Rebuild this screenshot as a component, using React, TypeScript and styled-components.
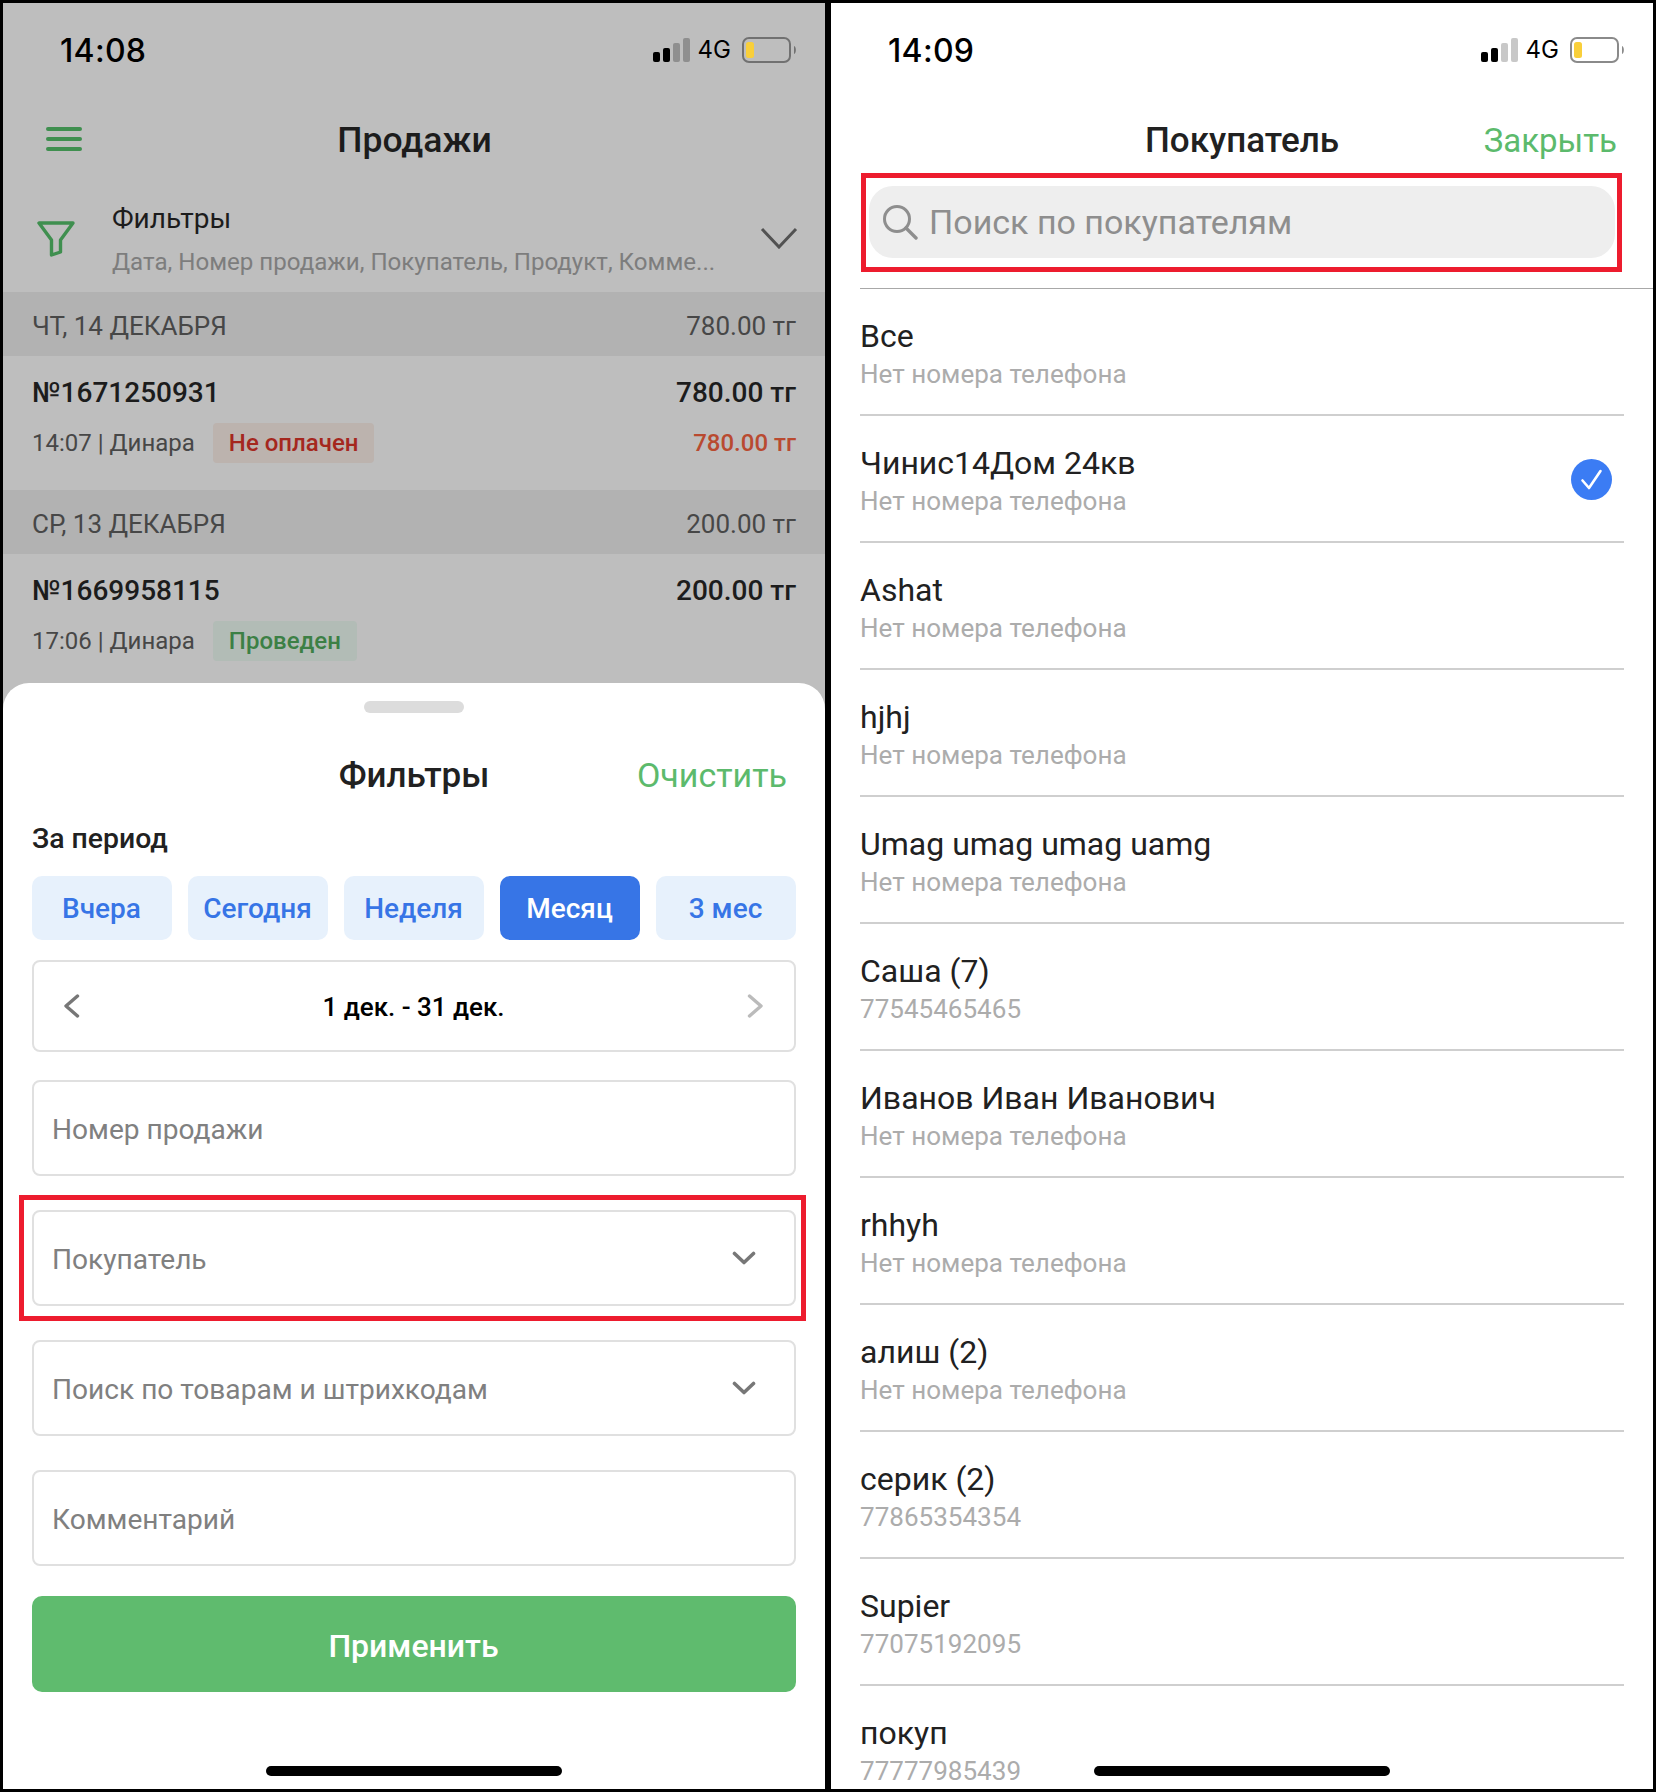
import React from "react";
import styled, { createGlobalStyle } from "styled-components";

const Global = createGlobalStyle`
  html, body { margin: 0; padding: 0; background: #000; }
  * { box-sizing: border-box; }
  body { font-family: Roboto, "Liberation Sans", sans-serif; }
`;

const Frame = styled.div`
  width: 1656px;
  height: 1792px;
  background: #000;
  padding: 3px;
  display: flex;
  gap: 6px;
  overflow: hidden;
`;

const Phone = styled.div<{ $dim?: boolean }>`
  position: relative;
  width: 822px;
  height: 1786px;
  background: ${(p) => (p.$dim ? "#bebebe" : "#fff")};
  display: flex;
  flex-direction: column;
  overflow: hidden;
`;

const StatusBar = styled.div`
  height: 97px;
  flex: none;
  display: flex;
  align-items: center;
  justify-content: space-between;
  padding: 0 28px 4px 57px;
`;

const Time = styled.div`
  font-family: Inter, sans-serif;
  font-size: 32px;
  font-weight: 500;
  color: #000;
  letter-spacing: 0.3px;
  padding-top: 2px;
`;

const StatusRight = styled.div`
  display: flex;
  align-items: center;
  gap: 8px;
`;

const Net = styled.span`
  font-family: Inter, sans-serif;
  font-size: 24px;
  color: #000;
  margin-right: 3px;
`;

const SalesArea = styled.div`
  height: 583px;
  flex: none;
  display: flex;
  flex-direction: column;
`;

const NavBar = styled.div`
  height: 80px;
  flex: none;
  display: flex;
  align-items: center;
  justify-content: center;
  position: relative;
`;

const NavIcon = styled.div`
  position: absolute;
  left: 43px;
  top: 26px;
  display: flex;
`;

const NavTitle = styled.div`
  font-size: 35.5px;
  font-weight: 500;
  color: #1c1c1c;
  padding-left: 1px;
`;

const FilterBar = styled.div`
  height: 112px;
  flex: none;
  display: flex;
  align-items: center;
  padding: 6px 27px 0 34px;
  > svg:last-child {
    margin-top: -2px;
  }
`;

const FilterText = styled.div`
  flex: 1;
  margin-left: 37px;
  display: flex;
  flex-direction: column;
  gap: 13px;
  padding-top: 3px;
`;

const FilterTitle = styled.div`
  font-size: 28px;
  color: #1c1c1c;
  line-height: 30px;
`;

const FilterSub = styled.div`
  font-size: 24.1px;
  color: #7d7d7d;
  line-height: 30px;
`;

const DayHeader = styled.div`
  height: 64px;
  flex: none;
  background: #b2b2b2;
  display: flex;
  align-items: center;
  justify-content: space-between;
  padding: 3px 29px 0;
  font-size: 26px;
  color: #474747;
`;

const Sale = styled.div`
  height: 134px;
  flex: none;
  padding: 19px 29px 0;
  display: flex;
  flex-direction: column;
  gap: 12px;
`;

const SaleRow = styled.div`
  display: flex;
  align-items: center;
  justify-content: space-between;
`;

const SaleNumber = styled.div`
  font-size: 28px;
  font-weight: 500;
  color: #1c1c1c;
  line-height: 36px;
`;

const SaleMeta = styled.div`
  display: flex;
  align-items: center;
  gap: 18px;
  font-size: 24px;
  color: #474747;
`;

const Badge = styled.span<{ $tone: "red" | "green" }>`
  height: 40px;
  padding: 0 16px;
  display: inline-flex;
  align-items: center;
  border-radius: 4px;
  font-size: 24px;
  font-weight: 500;
  background: ${(p) => (p.$tone === "red" ? "#bcb3ae" : "#b2bcb6")};
  color: ${(p) => (p.$tone === "red" ? "#a5271e" : "#3c8045")};
`;

const DueAmount = styled.span`
  font-size: 24px;
  font-weight: 500;
  color: #b94a30;
`;

const Sheet = styled.div`
  flex: 1;
  background: #fff;
  border-radius: 26px 26px 0 0;
  padding: 18px 29px 0;
  display: flex;
  flex-direction: column;
`;

const Handle = styled.div`
  flex: none;
  width: 100px;
  height: 12px;
  border-radius: 6px;
  background: #dcdcdc;
  align-self: center;
`;

const SheetHead = styled.div`
  flex: none;
  margin-top: 32px;
  height: 60px;
  display: grid;
  grid-template-columns: 1fr auto 1fr;
  align-items: center;
`;

const SheetTitle = styled.div`
  grid-column: 2;
  font-size: 35px;
  font-weight: 500;
  color: #212121;
`;

const Action = styled.div`
  justify-self: end;
  padding-right: 9px;
  font-size: 34px;
  color: #5cba6c;
`;

const CloseAction = styled(Action)`
  padding-right: 7px;
  font-size: 33px;
`;

const SectionLabel = styled.div`
  flex: none;
  margin-top: 16px;
  height: 34px;
  display: flex;
  align-items: center;
  font-size: 28.4px;
  font-weight: 500;
  color: #212121;
`;

const Periods = styled.div`
  flex: none;
  margin-top: 21px;
  display: grid;
  grid-template-columns: repeat(5, 1fr);
  gap: 16px;
`;

const Period = styled.div<{ $active?: boolean }>`
  height: 64px;
  border-radius: 10px;
  padding: 1px 1px 0 0;
  display: flex;
  align-items: center;
  justify-content: center;
  font-size: 28px;
  font-weight: 500;
  background: ${(p) => (p.$active ? "#3775e6" : "#e7f1fc")};
  color: ${(p) => (p.$active ? "#fff" : "#3775e6")};
`;

const DateBox = styled.div`
  flex: none;
  margin-top: 20px;
  height: 92px;
  border: 2.5px solid #e0e0e0;
  border-radius: 8px;
  padding: 0 30px 0 29px;
  display: flex;
  align-items: center;
  justify-content: space-between;
`;

const DateText = styled.div`
  font-size: 26px;
  font-weight: 500;
  color: #000;
  padding-top: 2px;
`;

const Form = styled.div`
  flex: none;
  margin-top: 28px;
  display: flex;
  flex-direction: column;
  gap: 34px;
`;

const Field = styled.div<{ $marked?: boolean }>`
  position: relative;
  height: 96px;
  border: 2.5px solid #e0e0e0;
  border-radius: 8px;
  padding: 2px 38px 0 18px;
  display: flex;
  align-items: center;
  justify-content: space-between;
  font-size: 28.1px;
  color: #808080;
  svg {
    margin-top: -2px;
  }
  ${(p) =>
    p.$marked
      ? `&::after {
          content: "";
          position: absolute;
          inset: -17px -12px -17px -15px;
          border: 5px solid #ed1c2e;
          pointer-events: none;
        }`
      : ""}
`;

const ApplyButton = styled.div`
  flex: none;
  margin-top: 30px;
  height: 96px;
  border-radius: 10px;
  background: #5fbb6e;
  color: #fff;
  font-size: 32px;
  font-weight: 500;
  padding: 3px 1px 0 0;
  display: flex;
  align-items: center;
  justify-content: center;
`;

const HomeBar = styled.div`
  position: absolute;
  left: 263px;
  bottom: 13px;
  width: 296px;
  height: 10px;
  border-radius: 5px;
  background: #000;
`;

const PickerHead = styled.div`
  flex: none;
  height: 80px;
  padding: 0 29px;
  display: grid;
  grid-template-columns: 1fr auto 1fr;
  align-items: center;
`;

const SearchBlock = styled.div`
  position: relative;
  flex: none;
  margin: 6px 38px 0 38px;
  height: 72px;
  border-radius: 24px;
  background: #eeeeee;
  padding-left: 13px;
  display: flex;
  align-items: center;
  gap: 11px;
  font-size: 34px;
  color: #8e8e8e;
  &::after {
    content: "";
    position: absolute;
    inset: -13px -7px -14px -8px;
    border: 5px solid #ed1c2e;
    pointer-events: none;
  }
`;

const List = styled.div`
  margin-top: 30px;
  margin-left: 29px;
  flex: 1;
  display: flex;
  flex-direction: column;
  border-top: 1px solid #a8a8a8;
  overflow: hidden;
`;

const Customer = styled.div`
  height: 127px;
  flex: none;
  margin-right: 29px;
  padding-top: 27px;
  position: relative;
  border-bottom: 2px solid #cfcfcf;
  &:last-child {
    border-bottom: 0;
  }
`;

const CustomerName = styled.div`
  font-size: 32px;
  line-height: 41px;
  color: #212121;
`;

const CustomerPhone = styled.div`
  font-size: 26.05px;
  line-height: 34px;
  color: #acacac;
`;

const Check = styled.div`
  position: absolute;
  right: 12px;
  top: 43px;
  display: flex;
`;

const Signal = ({ faded }: { faded: string }) => (
  <svg width="37" height="24" viewBox="0 0 37 24">
    <rect x="0" y="14" width="7" height="10" rx="2" fill="#000" />
    <rect x="10" y="10" width="7" height="14" rx="2" fill="#000" />
    <rect x="20" y="5" width="7" height="19" rx="2" fill={faded} />
    <rect x="30" y="0" width="7" height="24" rx="2" fill={faded} />
  </svg>
);

const Battery = ({ line }: { line: string }) => (
  <svg width="55" height="26" viewBox="0 0 55 26">
    <rect x="1" y="1" width="47" height="24" rx="6" fill="none" stroke={line} strokeWidth="2" />
    <rect x="4" y="5" width="8" height="16" rx="2.5" fill="#f9cf3a" />
    <path d="M52 9 C54.5 10 54.5 16 52 17 Z" fill={line} />
  </svg>
);

const Status = ({ time, faded, line }: { time: string; faded: string; line: string }) => (
  <StatusBar>
    <Time>{time}</Time>
    <StatusRight>
      <Signal faded={faded} />
      <Net>4G</Net>
      <Battery line={line} />
    </StatusRight>
  </StatusBar>
);

const Chevron = () => (
  <svg width="24" height="14" viewBox="0 0 24 14">
    <path d="M2.5 2.5 L12 11.5 L21.5 2.5" fill="none" stroke="#777" strokeWidth="3.6" strokeLinecap="round" strokeLinejoin="round" />
  </svg>
);

const Arrow = ({ back }: { back?: boolean }) => (
  <svg width="17" height="24" viewBox="0 0 17 24">
    <path
      d={back ? "M14.5 2 L3 12 L14.5 22" : "M2.5 2 L14 12 L2.5 22"}
      fill="none"
      stroke={back ? "#777" : "#bbb"}
      strokeWidth="3.4"
      strokeLinecap="round"
      strokeLinejoin="round"
    />
  </svg>
);

const customers: [string, string][] = [
  ["Все", "Нет номера телефона"],
  ["Чинис14Дом 24кв", "Нет номера телефона"],
  ["Ashat", "Нет номера телефона"],
  ["hjhj", "Нет номера телефона"],
  ["Umag umag umag uamg", "Нет номера телефона"],
  ["Саша (7)", "77545465465"],
  ["Иванов Иван Иванович", "Нет номера телефона"],
  ["rhhyh", "Нет номера телефона"],
  ["алиш (2)", "Нет номера телефона"],
  ["серик (2)", "77865354354"],
  ["Supier", "77075192095"],
  ["покуп", "77777985439"],
];

export default function App() {
  return (
    <Frame>
      <Global />
      <Phone $dim>
        <Status time="14:08" faded="#8f8f8f" line="#717171" />
        <SalesArea>
          <NavBar>
            <NavIcon>
              <svg width="36" height="26" viewBox="0 0 36 26">
                <path d="M2 3H34M2 13H34M2 23H34" stroke="#3f8f4f" strokeWidth="4" strokeLinecap="round" />
              </svg>
            </NavIcon>
            <NavTitle>Продажи</NavTitle>
          </NavBar>
          <FilterBar>
            <svg width="38" height="36" viewBox="0 0 38 36">
              <path d="M2 2H36L23.5 19V31L14.5 34V19Z" fill="none" stroke="#3f8f4f" strokeWidth="3.4" strokeLinejoin="round" />
            </svg>
            <FilterText>
              <FilterTitle>Фильтры</FilterTitle>
              <FilterSub>Дата, Номер продажи, Покупатель, Продукт, Комме...</FilterSub>
            </FilterText>
            <svg width="38" height="22" viewBox="0 0 38 22">
              <path d="M2 2L19 20L36 2" fill="none" stroke="#525252" strokeWidth="3" />
            </svg>
          </FilterBar>
          <DayHeader>
            <span>ЧТ, 14 ДЕКАБРЯ</span>
            <span>780.00 тг</span>
          </DayHeader>
          <Sale>
            <SaleRow>
              <SaleNumber>№1671250931</SaleNumber>
              <SaleNumber>780.00 тг</SaleNumber>
            </SaleRow>
            <SaleRow>
              <SaleMeta>
                14:07 | Динара
                <Badge $tone="red">Не оплачен</Badge>
              </SaleMeta>
              <DueAmount>780.00 тг</DueAmount>
            </SaleRow>
          </Sale>
          <DayHeader>
            <span>СР, 13 ДЕКАБРЯ</span>
            <span>200.00 тг</span>
          </DayHeader>
          <Sale>
            <SaleRow>
              <SaleNumber>№1669958115</SaleNumber>
              <SaleNumber>200.00 тг</SaleNumber>
            </SaleRow>
            <SaleRow>
              <SaleMeta>
                17:06 | Динара
                <Badge $tone="green">Проведен</Badge>
              </SaleMeta>
            </SaleRow>
          </Sale>
        </SalesArea>
        <Sheet>
          <Handle />
          <SheetHead>
            <SheetTitle>Фильтры</SheetTitle>
            <Action>Очистить</Action>
          </SheetHead>
          <SectionLabel>За период</SectionLabel>
          <Periods>
            <Period>Вчера</Period>
            <Period>Сегодня</Period>
            <Period>Неделя</Period>
            <Period $active>Месяц</Period>
            <Period>3 мес</Period>
          </Periods>
          <DateBox>
            <Arrow back />
            <DateText>1 дек. - 31 дек.</DateText>
            <Arrow />
          </DateBox>
          <Form>
            <Field>Номер продажи</Field>
            <Field $marked>
              Покупатель
              <Chevron />
            </Field>
            <Field>
              Поиск по товарам и штрихкодам
              <Chevron />
            </Field>
            <Field>Комментарий</Field>
          </Form>
          <ApplyButton>Применить</ApplyButton>
        </Sheet>
        <HomeBar />
      </Phone>
      <Phone>
        <Status time="14:09" faded="#c8c8c8" line="#8a8a8a" />
        <PickerHead>
          <SheetTitle>Покупатель</SheetTitle>
          <CloseAction>Закрыть</CloseAction>
        </PickerHead>
        <SearchBlock>
          <svg width="36" height="36" viewBox="0 0 36 36">
            <circle cx="15" cy="15" r="12.5" fill="none" stroke="#8e8e8e" strokeWidth="3" />
            <path d="M24 24L34 34" stroke="#8e8e8e" strokeWidth="3.4" strokeLinecap="round" />
          </svg>
          Поиск по покупателям
        </SearchBlock>
        <List>
          {customers.map(([name, phone], i) => (
            <Customer key={name}>
              <CustomerName>{name}</CustomerName>
              <CustomerPhone>{phone}</CustomerPhone>
              {i === 1 && (
                <Check>
                  <svg width="41" height="41" viewBox="0 0 41 41">
                    <circle cx="20.5" cy="20.5" r="20.5" fill="#3b7cf4" />
                    <path d="M11.5 21.5L18 29L29.5 12" fill="none" stroke="#fff" strokeWidth="2.6" strokeLinecap="round" strokeLinejoin="round" />
                  </svg>
                </Check>
              )}
            </Customer>
          ))}
        </List>
        <HomeBar />
      </Phone>
    </Frame>
  );
}
